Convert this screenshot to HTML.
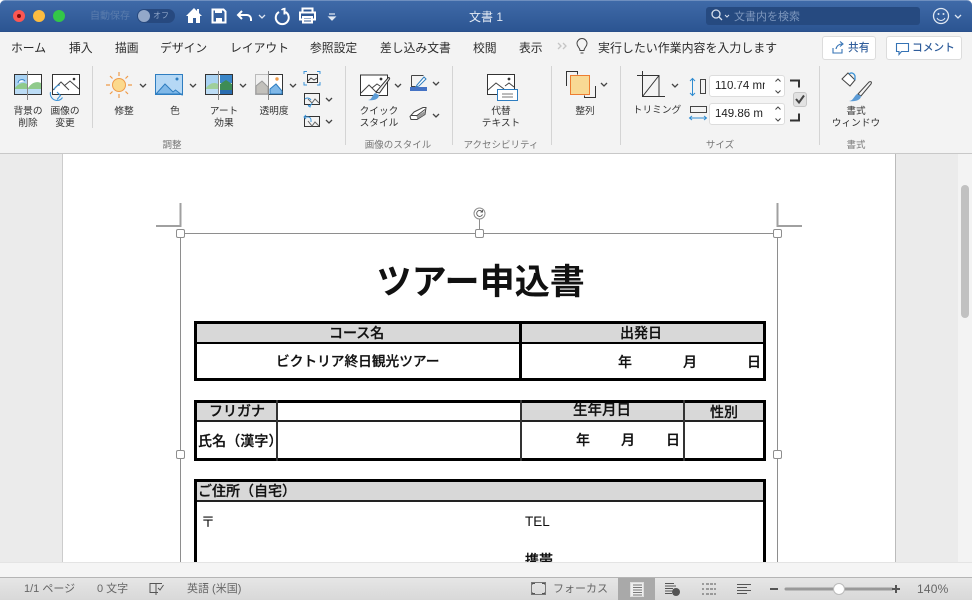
<!DOCTYPE html>
<html lang="ja"><head><meta charset="utf-8"><title>文書 1</title>
<style>
html,body{margin:0;padding:0;width:972px;height:600px;overflow:hidden;background:#fff}
body{position:relative;font-family:"Liberation Sans","Noto Sans CJK JP",sans-serif;color:#333}
div,span.a{position:absolute}
.t{position:absolute;white-space:nowrap;line-height:1}
.tab{position:absolute;top:42px;font-size:11.800px;line-height:12px;color:#2b2b2b;white-space:nowrap}
.l{position:absolute;font-size:9.700px;line-height:11.500px;color:#333;text-align:center;white-space:nowrap;transform:translateX(-50%)}
.g{position:absolute;top:140px;font-size:9.500px;line-height:12px;color:#777;white-space:nowrap;transform:translateX(-50%)}
.sep{position:absolute;width:1px;background:#d4d4d4}
.d{position:absolute;font-family:"Liberation Sans","Noto Sans CJK JP",sans-serif;color:#111;font-weight:500;-webkit-text-stroke:.25px #111;white-space:nowrap;line-height:1}
.s{position:absolute;top:583px;font-size:11px;line-height:13px;color:#666;white-space:nowrap}
.b{position:absolute;background:#000}
.gr{position:absolute;background:#d8d8d8}
svg{position:absolute;left:0;top:0;overflow:visible}
</style></head><body>

<!-- doc area -->
<div style="left:0;top:153px;width:972px;height:410px;background:#ebebeb"></div>
<div style="left:62px;top:153px;width:834px;height:410px;background:#fff;border-left:1px solid #ccc;border-right:1px solid #bbb;box-sizing:border-box"></div>
<div style="left:958px;top:154px;width:14px;height:408px;background:#f3f3f3"></div>
<div style="left:961px;top:185px;width:8px;height:133px;background:#c1c1c1;border-radius:4px"></div>

<!-- document tables -->
<div class="d" style="left:376.500px;top:265px;font-size:35.100px;font-weight:bold;-webkit-text-stroke:0;line-height:36px">ツアー申込書</div>

<div class="gr" style="left:194px;top:322px;width:571px;height:21px"></div>
<div class="b" style="left:194px;top:321px;width:571px;height:3px"></div>
<div class="b" style="left:194px;top:342px;width:571px;height:2px"></div>
<div class="b" style="left:194px;top:378px;width:571px;height:3px"></div>
<div class="b" style="left:194px;top:321px;width:3px;height:60px"></div>
<div class="b" style="left:763px;top:321px;width:3px;height:60px"></div>
<div class="b" style="left:519px;top:321px;width:3px;height:60px"></div>
<div class="d" style="left:329px;top:326px;font-size:14px">コース名</div>
<div class="d" style="left:620px;top:326px;font-size:14px">出発日</div>
<div class="d" style="left:276px;top:355px;font-size:13.700px">ビクトリア終日観光ツアー</div>
<div class="d" style="left:618px;top:355px;font-size:14px">年</div>
<div class="d" style="left:683px;top:355px;font-size:14px">月</div>
<div class="d" style="left:747px;top:355px;font-size:14px">日</div>

<div class="gr" style="left:194px;top:401px;width:83px;height:20px"></div>
<div class="gr" style="left:521px;top:401px;width:244px;height:20px"></div>
<div class="b" style="left:194px;top:400px;width:571px;height:3px"></div>
<div class="b" style="left:194px;top:420px;width:571px;height:2px;background:#222"></div>
<div class="b" style="left:194px;top:458px;width:571px;height:3px"></div>
<div class="b" style="left:194px;top:400px;width:3px;height:61px"></div>
<div class="b" style="left:763px;top:400px;width:3px;height:61px"></div>
<div class="b" style="left:276px;top:400px;width:2px;height:61px;background:#333"></div>
<div class="b" style="left:520px;top:400px;width:2px;height:61px;background:#333"></div>
<div class="b" style="left:683px;top:400px;width:2px;height:61px;background:#333"></div>
<div class="d" style="left:209px;top:404px;font-size:14px">フリガナ</div>
<div class="d" style="left:198px;top:434px;font-size:14px;letter-spacing:.1px">氏名（漢字）</div>
<div class="d" style="left:573px;top:404px;font-size:14.500px">生年月日</div>
<div class="d" style="left:710px;top:405px;font-size:14px">性別</div>
<div class="d" style="left:576px;top:433px;font-size:14px">年</div>
<div class="d" style="left:621px;top:433px;font-size:14px">月</div>
<div class="d" style="left:666px;top:433px;font-size:14px">日</div>

<div class="gr" style="left:194px;top:480px;width:571px;height:21px"></div>
<div class="b" style="left:194px;top:479px;width:571px;height:3px"></div>
<div class="b" style="left:194px;top:500px;width:571px;height:2px;background:#222"></div>
<div class="b" style="left:194px;top:479px;width:3px;height:90px"></div>
<div class="b" style="left:763px;top:479px;width:3px;height:90px"></div>
<div class="d" style="left:198px;top:484px;font-size:14px">ご住所（自宅）</div>
<div class="d" style="left:201px;top:515px;font-size:14px;font-weight:normal;-webkit-text-stroke:0">〒</div>
<div class="d" style="left:525px;top:515px;font-size:13.500px;font-weight:normal;-webkit-text-stroke:0">TEL</div>
<div class="d" style="left:525px;top:553px;font-size:14px">携帯</div>

<!-- selection frame -->
<svg width="972" height="600" viewBox="0 0 972 600" fill="none">
<g stroke="#8e8e8e">
<path d="M180.500 233.500H777.500M180.500 233.500V563M777.500 233.500V563"/>
<path d="M479.500 218V233"/>
<path d="M156 226H180.500V203" stroke-width="2" stroke="#a0a0a0"/>
<path d="M802 226H777.500V203" stroke-width="2" stroke="#a0a0a0"/>
</g>
<g fill="#fff" stroke="#8e8e8e">
<rect x="176.500" y="229.500" width="8" height="8" rx="1.500"/><rect x="475.500" y="229.500" width="8" height="8" rx="1.500"/><rect x="773.500" y="229.500" width="8" height="8" rx="1.500"/>
<rect x="176.500" y="450.500" width="8" height="8" rx="1.500"/><rect x="773.500" y="450.500" width="8" height="8" rx="1.500"/>
<circle cx="479.500" cy="213.500" r="5.500"/>
</g>
<path d="M482 211.500a3 3 0 1 0 .5 3M482.500 210v2h-2" stroke="#555" stroke-width=".9"/>
</svg>

<!-- bottom bars -->
<div style="left:0;top:562px;width:972px;height:16px;background:#f5f5f5;border-top:1px solid #e4e4e4;box-sizing:border-box"></div>
<div style="left:0;top:577px;width:972px;height:23px;background:linear-gradient(#e6e6e6,#d8d8d8);border-top:1px solid #b5b5b5;box-sizing:border-box"></div>
<div style="left:618px;top:578px;width:37px;height:22px;background:#a9a9a9"></div>
<div class="s" style="left:24px;top:583px">1/1 ページ</div>
<div class="s" style="left:97px;top:583px">0 文字</div>
<div class="s" style="left:187px;top:583px">英語 (米国)</div>
<div class="s" style="left:553px;top:583px">フォーカス</div>
<div class="s" style="left:917px;font-size:12px;letter-spacing:.2px">140%</div>

<!-- title bar -->
<div style="left:0;top:0;width:972px;height:32px;background:linear-gradient(#3f6aa8,#2c5592 95%,#284d86);border-top:1px solid #6e8fbf;box-sizing:border-box;border-radius:5px 5px 0 0"></div>
<div class="t" style="left:90px;top:12px;font-size:10px;color:#5a7cad">自動保存</div>
<div style="left:137px;top:9px;width:38px;height:14px;border-radius:7px;background:#27497f"></div>
<div style="left:138px;top:10px;width:12px;height:12px;border-radius:6px;background:#93a8c9"></div>
<div class="t" style="left:153px;top:12px;font-size:8px;color:#8fa6c8">オフ</div>
<div class="t" style="left:469px;top:11px;font-size:12px;color:#e2e9f3">文書 1</div>
<div style="left:706px;top:7px;width:214px;height:18px;border-radius:3px;background:#264a80"></div>
<div class="t" style="left:734px;top:12px;font-size:11px;color:#7d97bd">文書内を検索</div>

<!-- ribbon -->
<div style="left:0;top:32px;width:972px;height:121px;background:#f3f3f3;border-bottom:1px solid #c8c8c8;box-sizing:content-box"></div>
<span class="tab" style="left:11px">ホーム</span>
<span class="tab" style="left:69px">挿入</span>
<span class="tab" style="left:115px">描画</span>
<span class="tab" style="left:160px">デザイン</span>
<span class="tab" style="left:230px">レイアウト</span>
<span class="tab" style="left:310px">参照設定</span>
<span class="tab" style="left:380px">差し込み文書</span>
<span class="tab" style="left:473px">校閲</span>
<span class="tab" style="left:519px">表示</span>
<span class="tab" style="left:598px;font-size:11.950px">実行したい作業内容を入力します</span>

<div style="left:822px;top:36px;width:54px;height:24px;background:#fff;border:1px solid #dcdcdc;border-radius:3px;box-sizing:border-box"></div>
<div style="left:886px;top:36px;width:76px;height:24px;background:#fff;border:1px solid #dcdcdc;border-radius:3px;box-sizing:border-box"></div>
<div class="t" style="left:848px;top:43px;font-size:10.700px;color:#2f5d9b;font-weight:500">共有</div>
<div class="t" style="left:912px;top:43px;font-size:10.700px;color:#2f5d9b;font-weight:500">コメント</div>

<i class="sep" style="left:92px;top:66px;height:62px"></i>
<i class="sep" style="left:345px;top:66px;height:79px"></i>
<i class="sep" style="left:452px;top:66px;height:79px"></i>
<i class="sep" style="left:551px;top:66px;height:79px"></i>
<i class="sep" style="left:620px;top:66px;height:79px"></i>
<i class="sep" style="left:819px;top:66px;height:79px"></i>

<div class="l" style="left:28px;top:106px">背景の<br>削除</div>
<div class="l" style="left:65px;top:106px">画像の<br>変更</div>
<div class="l" style="left:124px;top:106px">修整</div>
<div class="l" style="left:175px;top:106px">色</div>
<div class="l" style="left:224px;top:106px">アート<br>効果</div>
<div class="l" style="left:274px;top:106px">透明度</div>
<div class="l" style="left:379px;top:106px">クイック<br>スタイル</div>
<div class="l" style="left:501px;top:106px">代替<br>テキスト</div>
<div class="l" style="left:585px;top:106px">整列</div>
<div class="l" style="left:657px;top:105px">トリミング</div>
<div class="l" style="left:856px;top:106px">書式<br>ウィンドウ</div>
<div class="g" style="left:172px">調整</div>
<div class="g" style="left:398px">画像のスタイル</div>
<div class="g" style="left:501px">アクセシビリティ</div>
<div class="g" style="left:720px">サイズ</div>
<div class="g" style="left:856px">書式</div>

<div style="left:709px;top:75px;width:76px;height:22px;background:#fff;border:1px solid #ddd;border-radius:3px;box-sizing:border-box"></div>
<div style="left:709px;top:103px;width:76px;height:22px;background:#fff;border:1px solid #ddd;border-radius:3px;box-sizing:border-box"></div>
<div class="t" style="left:715px;top:81px;font-size:11.500px;color:#222;width:50px;overflow:hidden">110.74 mm</div>
<div class="t" style="left:715px;top:109px;font-size:11.500px;color:#222;width:50px;overflow:hidden">149.86 m</div>
<div style="left:793px;top:92px;width:14px;height:15px;background:#e2e2e2;border:1px solid #c6c6c6;border-radius:3px;box-sizing:border-box"></div>

<svg width="972" height="600" viewBox="0 0 972 600" fill="none">
<!-- traffic lights -->
<circle cx="19" cy="16" r="6" fill="#fc5753"/><circle cx="19" cy="16" r="2" fill="#7e0a08"/>
<circle cx="39" cy="16" r="6" fill="#fdbc40"/><circle cx="59" cy="16" r="6" fill="#33c748"/>
<!-- qat -->
<path d="M186 16l8-8 3 3V9h2v4l3 3h-2v7h-4v-5h-3v5h-5v-7z" fill="#fff"/>
<path d="M212.500 9.500h11l2 2v11h-13z" stroke="#fff" stroke-width="2"/><rect x="215" y="9" width="7" height="4" fill="#fff"/><rect x="216" y="18" width="6" height="5" fill="#fff"/>
<path d="M242 11l-4 4 4 4M238 15h9a4 4 0 0 1 4 4v2" stroke="#fff" stroke-width="2"/>
<path d="M259 15l3 3 3-3" stroke="#dfe7f2" stroke-width="1.300"/>
<path d="M279 12a6.500 6.500 0 1 0 6.500 0M284.500 8v6.500" stroke="#fff" stroke-width="2"/><path d="M285.500 8.500c-1.500 0-3 .5-4 1.500" stroke="#fff" stroke-width="1.500"/>
<path d="M302.500 13v-4.500h10V13M300 12.500h15v7h-15zM303 17h9v5.500h-9z" stroke="#fff" stroke-width="2" fill="#2f5894"/>
<path d="M329 14h6M329 17h6l-3 3z" stroke="#dfe7f2" stroke-width="1.200" fill="#dfe7f2"/>
<!-- search, smiley -->
<circle cx="716" cy="14" r="4" stroke="#d5deec" stroke-width="1.300"/><path d="M719 17l3 3" stroke="#d5deec" stroke-width="1.300"/>
<path d="M725 15l2 2 2-2" stroke="#d5deec"/>
<circle cx="941" cy="16" r="7.500" stroke="#dfe7f2" stroke-width="1.300"/><circle cx="938.500" cy="14" r="1" fill="#dfe7f2"/><circle cx="943.500" cy="14" r="1" fill="#dfe7f2"/><path d="M937 18a4.500 4.500 0 0 0 8 0" stroke="#dfe7f2"/>
<path d="M955 15l3 3 3-3" stroke="#dfe7f2" stroke-width="1.300"/>
<!-- tell me -->
<path d="M558 43l3 3-3 3M563 43l3 3-3 3" stroke="#c5c5c5" stroke-width="1.300"/>
<path d="M580 50.500c0-3-3-3.500-3-7a5 5 0 0 1 10 0c0 3.500-3 4-3 7zM580.500 53h3" stroke="#444"/>
<path d="M833 48v5h9v-4M836 49c.5-3 3-5 6-5M840 41.500l3 2.500-3 2.500" stroke="#3573b5" stroke-width="1.100"/>
<path d="M896.500 43.500h12v8h-7l-2.500 3v-3h-2.500z" stroke="#3573b5" stroke-width="1.100"/>

<!-- 背景の削除 -->
<rect x="14.500" y="74.500" width="27" height="20" stroke="#333" fill="#fff"/>
<path d="M15 75h12v13H15zM28 75h13v13H28z" fill="#fff"/><path d="M15 75h12v13H15z" fill="#a9d2f2"/><path d="M15 88c4-5 8-6 12-4v5H15zM28 88c4-6 9-7 13-5v6H28z" fill="#8fca8b"/><path d="M15 89h26v5H15z" fill="#bcdcf5"/>
<path d="M18 83a4 4 0 0 1 7-2" stroke="#3a86c8" fill="#fff"/><path d="M27.500 71v29" stroke="#888"/>
<!-- 画像の変更 -->
<rect x="52.500" y="74.500" width="27" height="20" stroke="#333" fill="#fff"/>
<path d="M53 90l8-8 8 8M64 86l6-5 9 8" stroke="#444"/><circle cx="74" cy="79" r="1.300" fill="#333"/>
<path d="M54 90a7 7 0 0 1 6-5M50.500 92a7 7 0 0 0 6 8.500 7 7 0 0 0 6-3M57 92l3.500 3.500-3.500 4" stroke="#3d94d8" stroke-width="1.100"/>
<!-- sun -->
<circle cx="119" cy="85" r="6.500" fill="#fbd98d" stroke="#ef9b4a"/>
<path d="M119 72v4M119 94v4M106 85h4M128 85h4M110 76l2.500 2.500M128 76l-2.500 2.500M110 94l2.500-2.500M128 94l-2.500-2.500" stroke="#ef9b4a" stroke-width="1.200"/>
<!-- 色 -->
<rect x="155.500" y="74.500" width="27" height="20" stroke="#2e7dc0" fill="#b5d8f5"/>
<path d="M156 94l9-10 8 8 2.500-2 6.500 5v-1z" fill="#7fb8e8" stroke="#2e7dc0"/><circle cx="177" cy="79" r="1.500" fill="#2e7dc0"/>
<!-- アート効果 -->
<rect x="205.500" y="74.500" width="27" height="20" stroke="#333" fill="#fff"/>
<path d="M206 75h12v14h-12z" fill="#a9d2f2"/><path d="M206 88c4-5 8-6 12-4v5h-12z" fill="#9fcf9b"/><path d="M206 89h12v5h-12z" fill="#bcdcf5"/>
<path d="M220 75h12v8h-12z" fill="#3a86c8"/><path d="M220 84l6-4 6 4v6h-12z" fill="#3e8c55"/><path d="M220 90h12v4h-12z" fill="#2a6db0"/>
<path d="M218.500 71v29" stroke="#888"/>
<!-- 透明度 -->
<rect x="255.500" y="74.500" width="27" height="20" stroke="#333" fill="#fff"/>
<path d="M255.500 74.500h13v20h-13z" fill="#f0f0f0" stroke="#bbb"/><path d="M256 94v-8l6-5 6 6v7z" fill="#c2c0bb" stroke="#999"/>
<path d="M270 94v-5l6-5 6 7v3z" fill="#7fb8e8" stroke="#2e7dc0"/><circle cx="277" cy="79" r="1.700" fill="#ef9b4a"/><path d="M268.500 71v29" stroke="#888"/>
<!-- small stack -->
<rect x="307.500" y="74.500" width="10" height="8" stroke="#333"/><path d="M308 81l3-3 3 2 3-2" stroke="#444"/>
<path d="M304 74v-2.500h3M317 71.500h3V74M304 82v3h3M320 82v3h-3" stroke="#3d94d8"/>
<rect x="304.500" y="93.500" width="15" height="11" stroke="#333"/><path d="M308 99l4 4 3-4 4 4" stroke="#666"/><path d="M305 99a4 4 0 0 1 6 1M308 106a4 4 0 0 0 4-3M311 104l-1 3-2-2" stroke="#3d94d8"/>
<rect x="304.500" y="116.500" width="15" height="10" stroke="#333"/><path d="M308 121l4 5 3-4 4 4" stroke="#666"/><path d="M306 115l-2 2 2 2M304 117h4a3 3 0 0 1 3 3v2" stroke="#3d94d8"/>
<!-- chevrons -->
<g stroke="#444" stroke-width="1.300">
<path d="M140 84l3 3 3-3M190 84l3 3 3-3M240 84l3 3 3-3M290 84l3 3 3-3M326 98l3 3 3-3M326 120l3 3 3-3M395 84l3 3 3-3M433 82l3 3 3-3M433 114l3 3 3-3M601 83l3 3 3-3M672 84l3 3 3-3"/>
</g>
<!-- quick style -->
<rect x="360.500" y="75" width="27" height="20.500" stroke="#333" fill="#fff"/>
<path d="M361 93l8-8 8 8M372 88l5-4 3 2" stroke="#444"/><circle cx="381" cy="79" r="1.400" fill="#333"/>
<path d="M376 92l12-14c1-1 2 0 1.500 1l-10 14z" fill="#f3f3f3" stroke="#333"/>
<path d="M368 100c4 0 4-5 7-7l4 2c0 4-5 6-11 5z" fill="#5b9bd5"/>
<!-- pen -->
<path d="M411.500 75.500h12M411.500 75.500v11h4" stroke="#444"/><path d="M417 85l7-8 2 2-7 7-3 1z" stroke="#2e7dc0" fill="#fff"/>
<rect x="410" y="87" width="17" height="4" fill="#4472c4"/>
<!-- eraser -->
<path d="M414 112l9-4.500h3l-1 7-8 5h-6l-1-3z" fill="#fff" stroke="#444"/><path d="M411 115.500h6l1 3.500M417 115.500l8-6" stroke="#444"/><path d="M417 116l8-5-1 4-7 4z" fill="#999"/>
<!-- alt text -->
<rect x="487.500" y="74.500" width="27" height="20" stroke="#333" fill="#fff"/>
<path d="M488 90l8-7 8 6M505 86l4-3 5 4" stroke="#444"/><circle cx="509" cy="79" r="1.400" fill="#333"/>
<rect x="497.500" y="89.500" width="20" height="11" fill="#fff" stroke="#2e7dc0"/><path d="M502 94h11M502 97h11" stroke="#777"/>
<!-- arrange -->
<path d="M566.500 86V71.500h11v3M595.500 86v11.500h-11v-2" stroke="#333"/>
<rect x="570.500" y="75.500" width="19" height="19" fill="#f8d994" stroke="#ed7d31"/>
<!-- crop -->
<path d="M637 75.500h22v21M642.500 71v25.500H665M642.500 96.500l16.500-21" stroke="#333"/>
<!-- size icons -->
<path d="M692.500 79v16M690 81l2.500-2.500L695 81M690 93l2.500 2.500L695 93" stroke="#2e8bd0"/><rect x="700.500" y="79.500" width="5" height="14" stroke="#444"/>
<rect x="690.500" y="106.500" width="16" height="6" stroke="#444"/><path d="M690 118h16M692 116l-2.500 2 2.500 2M704 116l2.500 2-2.500 2" stroke="#2e8bd0"/>
<!-- spinners -->
<g stroke="#444"><path d="M775.500 81.500l2.500-2.500 2.500 2.500M775.500 90.500l2.500 2.500 2.500-2.500M775.500 109.500l2.500-2.500 2.500 2.500M775.500 118.500l2.500 2.500 2.500-2.500"/></g>
<!-- bracket -->
<path d="M790 80.500h9v7M790 120.500h9v-7" stroke="#333" stroke-width="2"/>
<path d="M796 99l3 3.500 5-7" stroke="#444" stroke-width="2"/>
<!-- format pane -->
<path d="M842 79l6-6 7 7-5 6z" fill="#fff" stroke="#444"/><path d="M849 74c2-2 5-1 6 2v4" stroke="#3d94d8" stroke-width="1.300"/>
<path d="M858 94l11-12c2-1 3 0 2 2l-10 12z" fill="#f3f3f3" stroke="#444"/>
<path d="M849 101c4 0 5-5 8-7l4 2c0 4-6 6-12 5z" fill="#5b9bd5"/>
<!-- status icons -->
<path d="M150 583.500h6v9h-6zM156 583.500h6M156 592.500h2M156 592.500v2.500" stroke="#555"/><path d="M158 588l2 2 3.500-5" stroke="#555"/>
<path d="M532 585v-1.500h3M542 583.500h3v1.500M532 592v1.500h3M542 593.500h3V592" stroke="#555"/><rect x="531.500" y="582.500" width="14" height="12" stroke="#777"/>
<rect x="630.500" y="582.500" width="13" height="14" fill="#eee" stroke="#ddd"/><path d="M633 585h9M633 587.500h9M633 590h9M633 592.500h9M633 595h9" stroke="#777"/>
<path d="M665 583.500h9M665 586h11M665 588.500h8M665 591h7M665 593.500h7" stroke="#555"/><circle cx="676" cy="592" r="4" fill="#555"/>
<path d="M706 584h10M706 589h10M706 594h10M702 584h2M702 589h2M702 594h2" stroke="#555" stroke-dasharray="3 1"/>
<path d="M737 584.500h14M737 587.500h10M737 590.500h14M737 593.500h10" stroke="#555"/>
<path d="M770 589h8" stroke="#555" stroke-width="2"/>
<path d="M786 589h106" stroke="#999" stroke-width="3" stroke-linecap="round"/>
<circle cx="839" cy="589" r="5.500" fill="#fff" stroke="#bbb"/>
<path d="M892 589h8M896 585v8" stroke="#555" stroke-width="2"/>
</svg>
</body></html>
